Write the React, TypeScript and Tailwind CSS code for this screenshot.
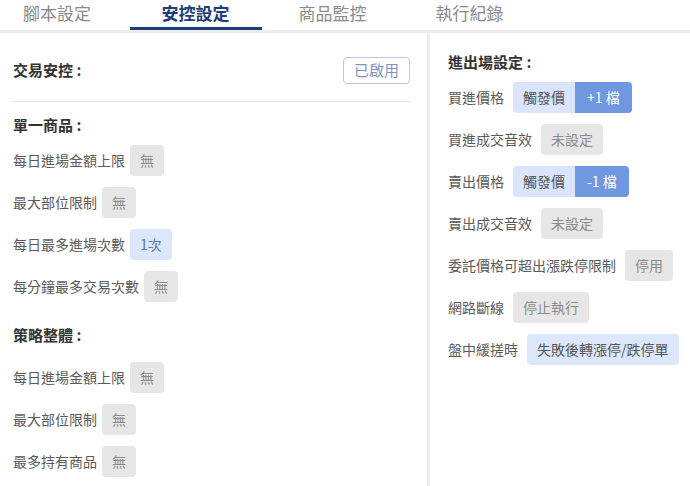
import React from "react";

const font = { fontFamily: '"Noto Sans CJK TC", "Noto Sans", sans-serif' };

function Gray({ children }: { children: React.ReactNode }) {
  return (
    <span className="inline-flex h-[31px] items-center rounded-[4px] bg-[#e6e6e6] px-[10px] text-[14px] text-[#8a8a8a]">
      {children}
    </span>
  );
}

function LeftRow({ label, value, blue }: { label: string; value: string; blue?: boolean }) {
  return (
    <div className="flex items-center gap-[5px]">
      <span className="text-[14px] text-[#5a5a5a]">{label}</span>
      {blue ? (
        <span className="inline-flex h-[31px] items-center rounded-[4px] bg-[#dce7fb] px-[10px] text-[14px] text-[#5577bb]">
          {value}
        </span>
      ) : (
        <Gray>{value}</Gray>
      )}
    </div>
  );
}

function RightRow({ label, children }: { label: string; children: React.ReactNode }) {
  return (
    <div className="flex items-center gap-[9px]">
      <span className="text-[14px] text-[#5a5a5a]">{label}</span>
      {children}
    </div>
  );
}

function Split({ a, b }: { a: string; b: string }) {
  return (
    <span className="inline-flex h-[31px] overflow-hidden rounded-[4px] text-[14px]">
      <span className="flex items-center bg-[#dae5fb] px-[10px] text-[#555]">{a}</span>
      <span className="flex items-center bg-[#6f98e0] px-[12px] text-white">{b}</span>
    </span>
  );
}

export default function App() {
  const tabs = ["安控設定", "商品監控", "執行紀錄"];
  return (
    <div className="h-[486px] w-[690px] overflow-hidden bg-white" style={font}>
      <div className="flex h-[30px] items-stretch bg-white">
        <div className="flex w-[127px] items-center justify-center pb-[4px] pr-[13px] text-[17px] text-[#8a8a8a]">腳本設定</div>
        {tabs.map((t, i) => (
          <div key={t} className="relative flex w-[137px] items-center justify-center pb-[4px]">
            <span className={i === 0 ? "text-[17px] font-semibold text-[#1f3d78]" : "text-[17px] text-[#8a8a8a]"}>{t}</span>
            {i === 0 && <div className="absolute bottom-0 left-[3px] right-[2px] h-[3px] bg-[#1f3d78]" />}
          </div>
        ))}
      </div>
      <div className="h-[3px] bg-[#ececec]" />
      <div className="flex h-[453px]">
        <div className="w-[427px] pl-[13px] pr-[17px] pt-[24px]">
          <div className="flex h-[27px] items-center justify-between">
            <span className="text-[15px] font-semibold text-[#333]">交易安控 :</span>
            <span className="inline-flex h-[27px] w-[67px] items-center justify-center rounded-[4px] border border-[#b9c7e0] text-[15px] text-[#7d93c2]">
              已啟用
            </span>
          </div>
          <div className="ml-[-1px] mt-[17px] h-px bg-[#e2e2e2]" />
          <div className="mt-[12px] h-[22px] text-[15px] font-semibold leading-[22px] text-[#333]">單一商品 :</div>
          <div className="mt-[9px] flex flex-col gap-[11px]">
            <LeftRow label="每日進場金額上限" value="無" />
            <LeftRow label="最大部位限制" value="無" />
            <LeftRow label="每日最多進場次數" value="1次" blue />
            <LeftRow label="每分鐘最多交易次數" value="無" />
          </div>
          <div className="mt-[22px] h-[22px] text-[15px] font-semibold leading-[22px] text-[#333]">策略整體 :</div>
          <div className="mt-[16px] flex flex-col gap-[11px]">
            <LeftRow label="每日進場金額上限" value="無" />
            <LeftRow label="最大部位限制" value="無" />
            <LeftRow label="最多持有商品" value="無" />
          </div>
        </div>
        <div className="w-[3px] bg-[#ececec]" />
        <div className="flex-1 pl-[18px] pt-[18px]">
          <div className="h-[22px] text-[15px] font-semibold leading-[22px] text-[#333]">進出場設定 :</div>
          <div className="mt-[9px] flex flex-col gap-[11px]">
            <RightRow label="買進價格">
              <Split a="觸發價" b="+1 檔" />
            </RightRow>
            <RightRow label="買進成交音效">
              <Gray>未設定</Gray>
            </RightRow>
            <RightRow label="賣出價格">
              <Split a="觸發價" b="-1 檔" />
            </RightRow>
            <RightRow label="賣出成交音效">
              <Gray>未設定</Gray>
            </RightRow>
            <RightRow label="委託價格可超出漲跌停限制">
              <Gray>停用</Gray>
            </RightRow>
            <RightRow label="網路斷線">
              <Gray>停止執行</Gray>
            </RightRow>
            <RightRow label="盤中緩搓時">
              <span className="inline-flex h-[31px] items-center rounded-[4px] bg-[#dce7fb] px-[10px] text-[14px] text-[#555]">
                失敗後轉漲停/跌停單
              </span>
            </RightRow>
          </div>
        </div>
      </div>
    </div>
  );
}
